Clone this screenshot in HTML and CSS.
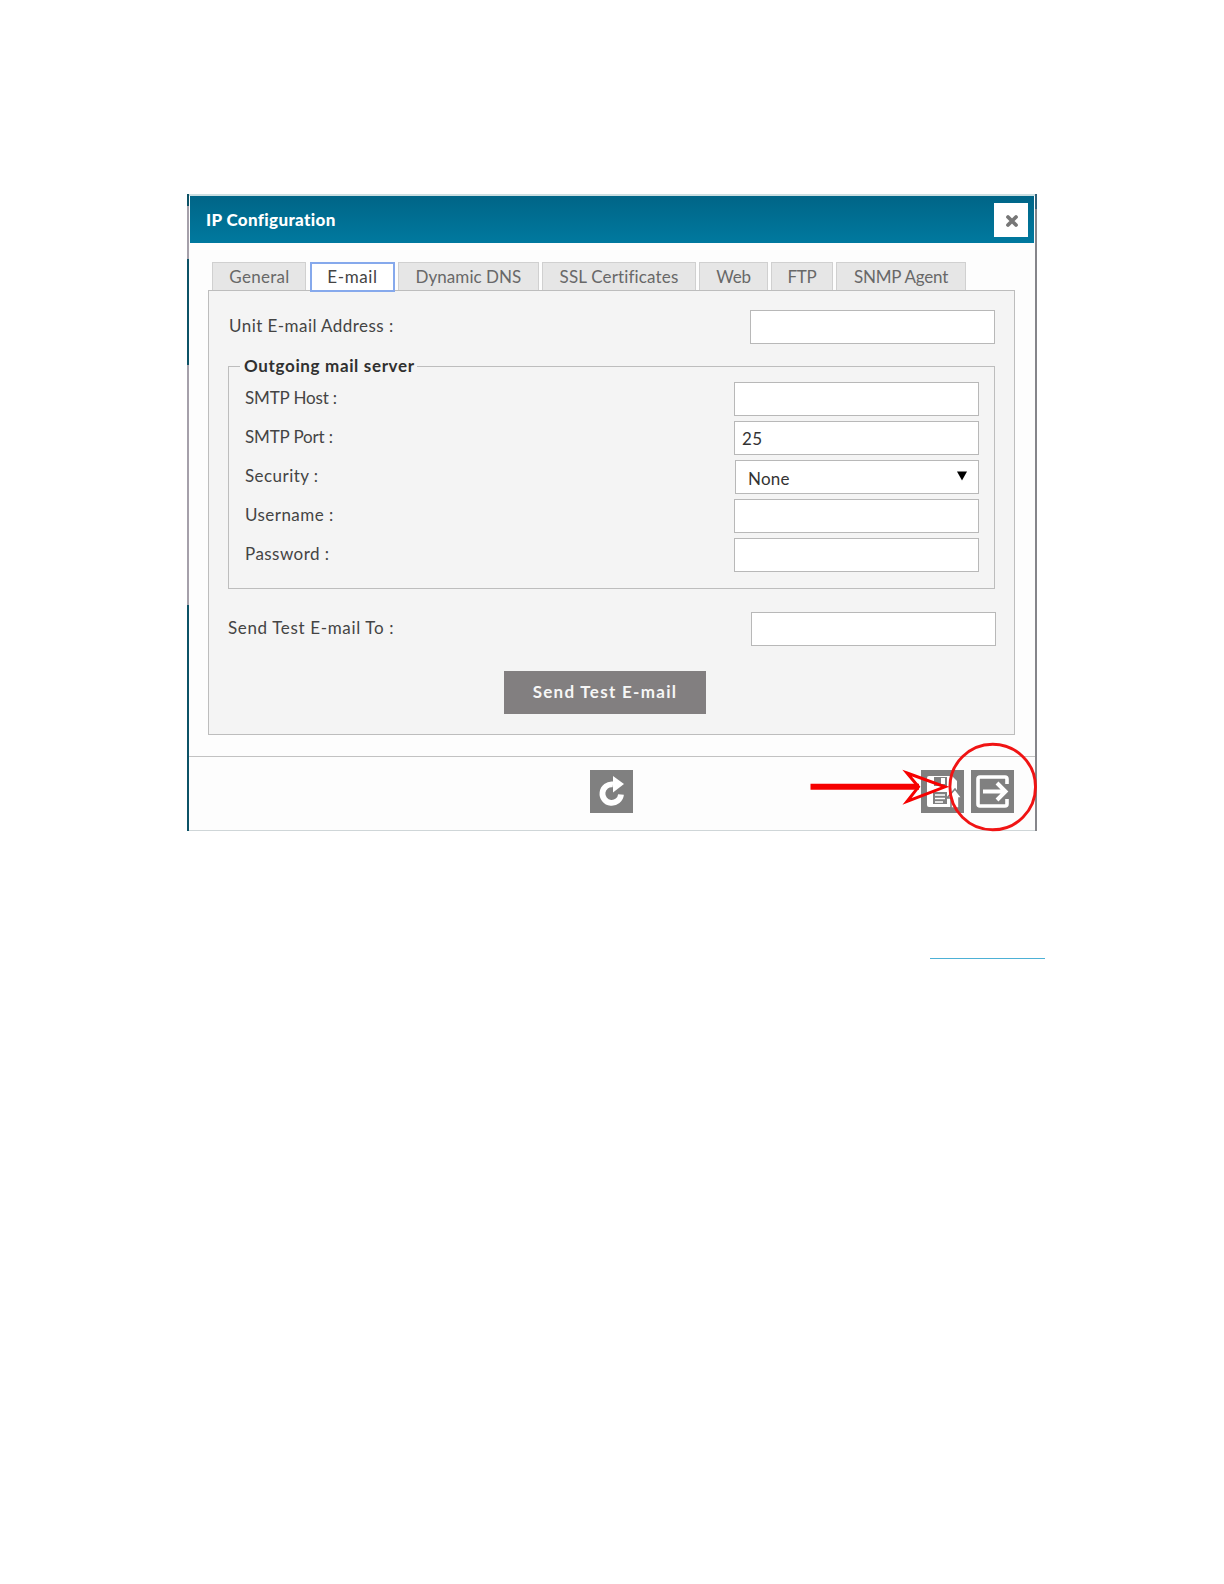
FILE: index.html
```html
<!DOCTYPE html>
<html lang="en">
<head>
    <meta charset="UTF-8">
    <meta name="viewport" content="width=device-width, initial-scale=1.0">
    <title>IP Configuration</title>
    <link rel="stylesheet" href="styles.css">
</head>
<body>
    <div class="window">
        <div class="dialog">
            <div class="header">
                <h1>IP Configuration</h1>
                <button class="close" aria-label="Close">
                    <svg width="14" height="14" viewBox="0 0 14 14"><path d="M3 3L11 11M11 3L3 11" stroke="#777" stroke-width="3.8" stroke-linecap="round"/></svg>
                </button>
            </div>

            <div class="content">
                <div class="tabs">
                    <div class="tab general"><span>General</span></div>
                    <div class="tab email active"><span>E-mail</span></div>
                    <div class="tab dns"><span>Dynamic DNS</span></div>
                    <div class="tab ssl"><span>SSL Certificates</span></div>
                    <div class="tab web"><span>Web</span></div>
                    <div class="tab ftp"><span>FTP</span></div>
                    <div class="tab snmp"><span>SNMP Agent</span></div>
                </div>

                <div class="panel">
                    <div class="row unit">
                        <label for="unitEmail">Unit E-mail Address :</label>
                        <input type="text" id="unitEmail">
                    </div>

                    <fieldset>
                        <legend>Outgoing mail server</legend>
                        <div class="row smtp">
                            <label for="smtpHost">SMTP Host :</label>
                            <input type="text" id="smtpHost">
                        </div>
                        <div class="row smtp">
                            <label for="smtpPort">SMTP Port :</label>
                            <input type="text" id="smtpPort" value="25">
                        </div>
                        <div class="row">
                            <label>Security :</label>
                            <div class="select">
                                <span>None</span>
                                <svg width="10" height="10" viewBox="0 0 10 10"><path d="M0 0.5H10L5 9.5Z"/></svg>
                            </div>
                        </div>
                        <div class="row">
                            <label for="username">Username :</label>
                            <input type="text" id="username">
                        </div>
                        <div class="row">
                            <label for="password">Password :</label>
                            <input type="password" id="password">
                        </div>
                    </fieldset>

                    <div class="row test">
                        <label for="testEmail">Send Test E-mail To :</label>
                        <input type="text" id="testEmail">
                    </div>
                    <button class="send">Send Test E-mail</button>
                </div>
            </div>

            <div class="footer">
                <button class="icon" aria-label="Refresh">
                    <svg width="43" height="43" viewBox="0 0 43 43">
                        <path d="M31 24.5A9.3 9.3 0 1 1 23 14.4" fill="none" stroke="#fff" stroke-width="5.8"/>
                        <path d="M23 6L34 14L23 22.5Z" fill="#fff"/>
                    </svg>
                </button>
                <div class="right">
                    <button class="icon" aria-label="Save">
                        <svg width="43" height="43" viewBox="0 0 43 43">
                            <path d="M8 6H31L36 11V37H8Q6 37 6 35V8Q6 6 8 6Z" fill="#fff"/>
                            <path d="M13 7H26V16H13Z" fill="#808080"/>
                            <path d="M20 8H24V14H20Z" fill="#fff"/>
                            <path d="M12 22H26V34H12Z" fill="#808080"/>
                            <path d="M14 25H24M14 28.5H24M14 32H22" stroke="#fff" stroke-width="1.7"/>
                            <path d="M34 19L41 28H38V38H30V28H26Z" fill="#fff" stroke="#808080" stroke-width="1.6"/>
                        </svg>
                    </button>
                    <button class="icon" aria-label="Exit">
                        <svg width="43" height="43" viewBox="0 0 43 43">
                            <path d="M36 14V9Q36 7 34 7H9Q7 7 7 9V34Q7 36 9 36H34Q36 36 36 34V29" fill="none" stroke="#fff" stroke-width="3.6"/>
                            <path d="M12 21.5H34M26 13L34.5 21.5L26 30" fill="none" stroke="#fff" stroke-width="4"/>
                        </svg>
                    </button>
                </div>
            </div>
        </div>

        <!-- red callout over the exit button -->
        <svg class="callout" width="230" height="92" viewBox="808 741 230 92">
            <path d="M810.5 786.8H919" stroke="#f60000" stroke-width="6"/>
            <path d="M907 773L945 786.8L907 801.5L918.5 786.8Z" fill="none" stroke="#f60000" stroke-width="3"/>
            <circle cx="992.7" cy="787" r="42.8" fill="none" stroke="#f01414" stroke-width="2.9"/>
        </svg>
    </div>

    <a class="link" href="#" aria-label="Link"></a>
</body>
</html>
```
FILE: styles.css
```css
* {
    box-sizing: border-box;
}
body {
    margin: 0;
    padding-top: 194px;
    background-color: #fff;
    color: #444;
    font-family: Lato, "Liberation Sans", sans-serif;
    font-size: 17px;
}
button {
    border: none;
    padding: 0;
    font-family: inherit;
}
svg {
    display: block;
}
.window {
    position: relative;
    width: 850px;
    height: 637px;
    margin-left: 187px;
    padding: 0 2px;
    background: linear-gradient(#0c5266 0 12px, #a5a0aa 12px 65px, #0c5266 65px 171px, #a5a0aa 171px 411px, #0c5266 411px) left / 2px 100% no-repeat,
        linear-gradient(#30617a 0 15px, #85858a 15px) right / 2px 100% no-repeat;
}
.dialog {
    height: 637px;
    background-color: #fdfdfd;
    border-top: 2px solid #cbdfe2;
    border-bottom: 1px solid #cfd6d8;
}
.header {
    display: flex;
    align-items: center;
    justify-content: space-between;
    height: 47px;
    margin: 0 1px;
    padding: 0 6px 0 16px;
    background: linear-gradient(#006587, #00799f);
}
h1 {
    margin: 0;
    color: #fff;
    font-size: 17px;
    font-weight: 900;
    letter-spacing: 0.35px;
}
.close {
    display: flex;
    align-items: center;
    justify-content: center;
    width: 34px;
    height: 34px;
    padding: 2px 0 0 2px;
    background-color: #fff;
}
.content {
    padding: 19px 20px 21px 19px;
}
.tabs {
    display: flex;
    gap: 3px;
    height: 28px;
    padding-left: 4px;
}
.tab {
    display: flex;
    align-items: center;
    justify-content: center;
    border: 1px solid #d0d0d0;
    border-bottom: none;
    background-color: #e6e6e6;
    color: #686868;
    white-space: nowrap;
}
.general { width: 94px; padding-left: 1px; letter-spacing: 0.3px; }
.email { width: 85px; letter-spacing: 0.6px; }
.dns { width: 141px; letter-spacing: 0.05px; }
.ssl { width: 154px; letter-spacing: 0.15px; }
.web { width: 69px; letter-spacing: -0.2px; }
.ftp { width: 62px; letter-spacing: -0.3px; }
.snmp { width: 130px; letter-spacing: -0.2px; }
.tab.active {
    height: 30px;
    margin-left: 1px;
    padding-bottom: 2px;
    border: 2px solid #86a9ec;
    background-color: #fff;
    color: #444;
    z-index: 1;
}
.panel {
    height: 445px;
    padding: 19px;
    border: 1px solid #bdbdbd;
    background-color: #f4f4f4;
}
.row {
    display: flex;
    align-items: center;
    justify-content: space-between;
    height: 34px;
    letter-spacing: 0.45px;
}
.row label {
    margin: 0 0 4px 1px;
}
.smtp label {
    letter-spacing: -0.15px;
}
input,
.select {
    width: 245px;
    height: 34px;
    padding: 0 7px;
    border: 1px solid #b8b8b8;
    background-color: #fff;
    color: #333;
    font-family: inherit;
    font-size: 17px;
    letter-spacing: 0.5px;
}
.select {
    display: flex;
    align-items: center;
    justify-content: space-between;
    width: 244px;
    padding: 2px 11px 0 12px;
    letter-spacing: 0.2px;
}
.select svg {
    margin-bottom: 4px;
}
fieldset {
    height: 233px;
    margin: 12px 0 0;
    padding: 6px 15px 0;
    border: 1px solid #bdbdbd;
}
fieldset .row {
    margin-bottom: 5px;
}
legend {
    height: 20px;
    margin-left: -4px;
    padding: 0 2px 0 4px;
    color: #303030;
    font-weight: bold;
    letter-spacing: 0.65px;
    line-height: 19px;
}
.test {
    width: 769px;
    margin: 23px 0 0 -1px;
    letter-spacing: 0.65px;
}
.send {
    display: block;
    width: 202px;
    height: 43px;
    margin: 25px 0 0 276px;
    padding-bottom: 2px;
    background-color: #827f80;
    color: #f6f6f6;
    font-size: 17px;
    font-weight: bold;
    letter-spacing: 1.3px;
}
.footer {
    display: flex;
    justify-content: space-between;
    height: 74px;
    padding: 13px 21px 0 401px;
    border-top: 1px solid #c2c2c2;
}
.icon {
    width: 43px;
    height: 43px;
    background-color: #808080;
}
.right {
    display: flex;
    gap: 7px;
}
.callout {
    position: absolute;
    left: 621px;
    top: 547px;
}
.link {
    display: block;
    width: 115px;
    height: 1px;
    margin: 127px 0 0 930px;
    background-color: #4db1d6;
}
```
